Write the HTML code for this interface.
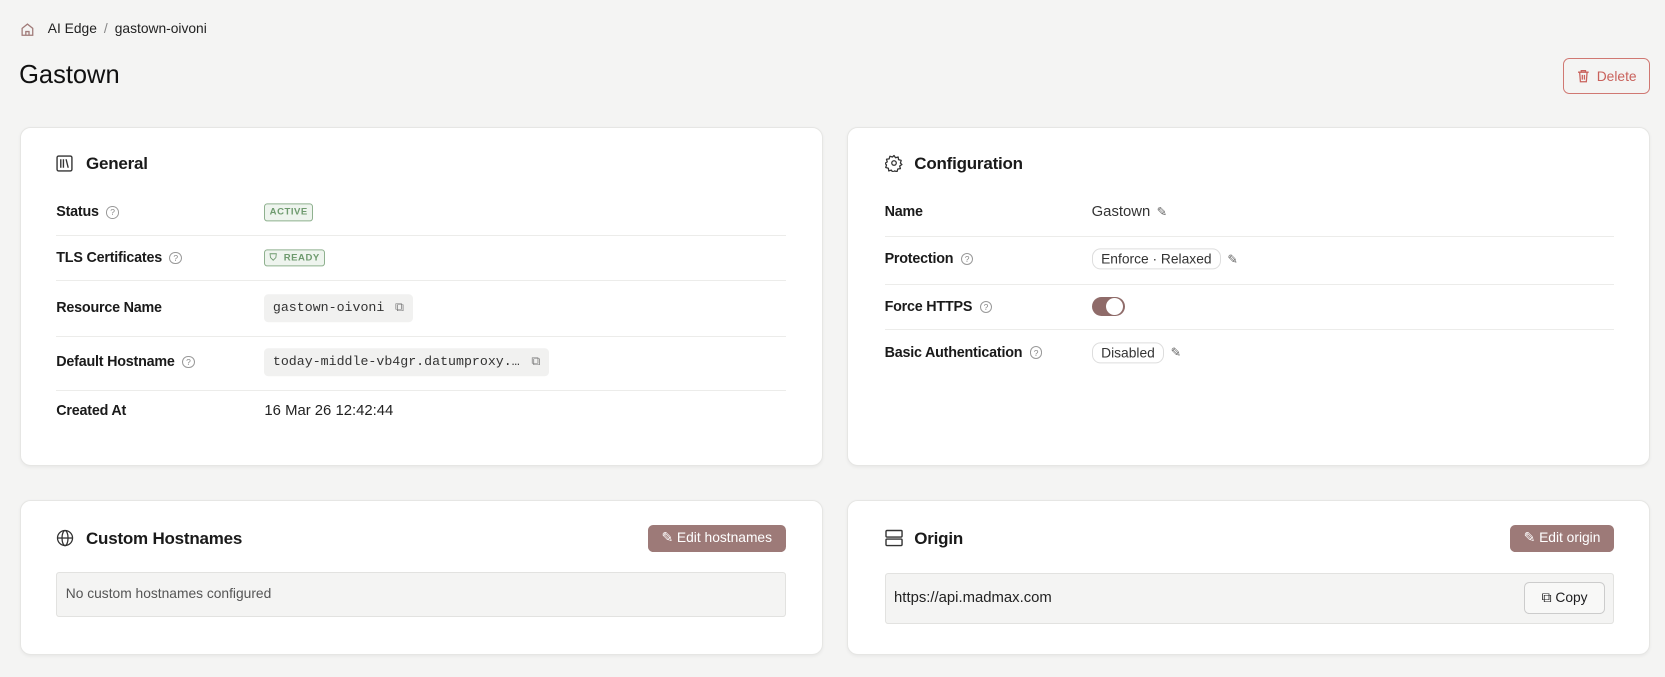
<!DOCTYPE html>
<html><head><meta charset="utf-8"><style>
html,body{margin:0;padding:0;background:#f4f4f3;width:1665px;height:677px;overflow:hidden}
#w{zoom:1.0619;position:relative;width:1568px;height:638px;font-family:"Liberation Sans",sans-serif;color:#1d1d1f}
.a{position:absolute}
.card{position:absolute;background:#fff;border:1px solid #e6e6e4;border-radius:10px;box-shadow:0 1px 3px rgba(0,0,0,.05)}
.h{position:absolute;font-size:16px;font-weight:600;color:#1a1a1a;letter-spacing:-.2px}
.lab{position:absolute;font-size:13.5px;font-weight:600;color:#1a1a1a;transform:translateY(-50%);display:flex;align-items:center;gap:7px;white-space:nowrap;letter-spacing:-.2px}
.val{position:absolute;font-size:14px;transform:translateY(-50%);display:flex;align-items:center;gap:6px;color:#333;white-space:nowrap}
.div{position:absolute;height:1px;background:#ececea}
.q{width:10px;height:10px;border:1px solid #999;border-radius:50%;font-size:8px;color:#888;display:inline-flex;align-items:center;justify-content:center;font-weight:400}
.badge{border:1px solid #8fb18f;background:#eef4ee;color:#6e9a6e;font-size:9px;letter-spacing:.5px;border-radius:3px;padding:2px 4px;font-weight:600}
.mono{font-family:"Liberation Mono",monospace;font-size:12.5px;background:#f1f1f0;border-radius:4px;padding:0 8px;height:26px;display:flex;align-items:center;gap:10px;white-space:nowrap}
.pill{border:1px solid #ddd;border-radius:8px;padding:2px 8px;font-size:13px;color:#333}
.btn{position:absolute;background:#9d7a78;color:#fff;border-radius:5px;font-size:13px;display:flex;align-items:center;justify-content:center;gap:6px}
.cp{color:#777;font-size:12px}
</style></head><body><div id="w">
<svg class="a" style="left:19px;top:21px" width="14" height="14" viewBox="0 0 14 14" fill="none" stroke="#a07a78" stroke-width="1.2"><path d="M2 6L7 2l5 4v6.5H2z"/><path d="M5.5 12.5V9h3v3.5"/></svg>
<div class="a" style="left:45px;top:20px;font-size:13px;color:#222">AI Edge <span style="color:#888;margin:0 3px">/</span> gastown-oivoni</div>
<div class="a" style="left:18px;top:57px;font-size:24px;color:#111">Gastown</div>
<div class="a" style="left:1472px;top:55px;width:80px;height:32px;border:1px solid #d07872;border-radius:6px;color:#c9615b;font-size:13px;display:flex;align-items:center;justify-content:center;gap:7px"><svg width="12" height="13" viewBox="0 0 12 13" fill="none" stroke="#c9615b" stroke-width="1.2"><path d="M1 3h10M4 3V1.5h4V3M2.5 3l.7 9h5.6l.7-9M5 5.5v4.5M7 5.5v4.5"/></svg>Delete</div>

<div class="card" style="left:19px;top:120px;width:754px;height:317px"></div>
<div class="card" style="left:798px;top:120px;width:754px;height:317px"></div>
<div class="card" style="left:19px;top:471px;width:754px;height:144px"></div>
<div class="card" style="left:798px;top:471px;width:754px;height:144px"></div>

<svg class="a" style="left:53px;top:146px" width="16" height="16" viewBox="0 0 16 16" fill="none" stroke="#333" stroke-width="1.3"><rect x="1" y="1" width="14" height="14" rx="1.5"/><path d="M4.5 4v8M7 4v8M9.5 4l2 8"/></svg>
<div class="h" style="left:81px;top:145px">General</div>
<div class="lab" style="left:53px;top:200px">Status <span class="q">?</span></div>
<div class="val" style="left:249px;top:200px"><span class="badge">ACTIVE</span></div>
<div class="div" style="left:53px;top:221px;width:687px"></div>
<div class="lab" style="left:53px;top:243px">TLS Certificates <span class="q">?</span></div>
<div class="val" style="left:249px;top:243px"><span class="badge">⛉&nbsp; READY</span></div>
<div class="div" style="left:53px;top:264px;width:687px"></div>
<div class="lab" style="left:53px;top:290px">Resource Name</div>
<div class="val" style="left:249px;top:290px"><span class="mono">gastown-oivoni <span class="cp">⧉</span></span></div>
<div class="div" style="left:53px;top:316px;width:687px"></div>
<div class="lab" style="left:53px;top:341px">Default Hostname <span class="q">?</span></div>
<div class="val" style="left:249px;top:341px"><span class="mono" style="width:252px;justify-content:space-between">today-middle-vb4gr.datumproxy.… <span class="cp">⧉</span></span></div>
<div class="div" style="left:53px;top:367px;width:687px"></div>
<div class="lab" style="left:53px;top:387px">Created At</div>
<div class="val" style="left:249px;top:387px;color:#222">16 Mar 26 12:42:44</div>

<svg class="a" style="left:833px;top:145px" width="17" height="17" viewBox="0 0 24 24" fill="none" stroke="#333" stroke-width="1.7"><circle cx="12" cy="12" r="3"/><path d="M12 2l2 3 3.5-1 .5 3.5 3.5 1-1 3.5 2 2-3 2 1 3.5-3.5.5-1 3.5-3.5-1-2 2-2-3-3.5 1-.5-3.5-3.5-1 1-3.5-2-2 3-2-1-3.5 3.5-.5 1-3.5 3.5 1z" stroke-linejoin="round"/></svg>
<div class="h" style="left:861px;top:145px">Configuration</div>
<div class="lab" style="left:833px;top:200px">Name</div>
<div class="val" style="left:1028px;top:200px">Gastown <span style="color:#666;font-size:12px">✎</span></div>
<div class="div" style="left:833px;top:222px;width:687px"></div>
<div class="lab" style="left:833px;top:244px">Protection <span class="q">?</span></div>
<div class="val" style="left:1028px;top:244px"><span class="pill">Enforce · Relaxed</span><span style="color:#666;font-size:12px">✎</span></div>
<div class="div" style="left:833px;top:267px;width:687px"></div>
<div class="lab" style="left:833px;top:289px">Force HTTPS <span class="q">?</span></div>
<div class="a" style="left:1028px;top:280px;width:31px;height:18px;border-radius:9px;background:#8f6b69"><div class="a" style="left:14px;top:1px;width:16px;height:16px;border-radius:50%;background:#fff"></div></div>
<div class="div" style="left:833px;top:310px;width:687px"></div>
<div class="lab" style="left:833px;top:332px">Basic Authentication <span class="q">?</span></div>
<div class="val" style="left:1028px;top:332px"><span class="pill">Disabled</span><span style="color:#666;font-size:12px">✎</span></div>

<svg class="a" style="left:53px;top:498px" width="17" height="17" viewBox="0 0 18 18" fill="none" stroke="#333" stroke-width="1.3"><circle cx="9" cy="9" r="7.5"/><ellipse cx="9" cy="9" rx="3" ry="7.5"/><path d="M1.5 9h15"/></svg>
<div class="h" style="left:81px;top:498px">Custom Hostnames</div>
<div class="btn" style="left:610px;top:494px;width:130px;height:26px">✎ Edit hostnames</div>
<div class="a" style="left:53px;top:539px;width:685px;height:40px;background:#f4f4f3;border:1px solid #e2e2e0;border-radius:3px;font-size:13px;color:#555;line-height:40px;text-indent:8px">No custom hostnames configured</div>

<svg class="a" style="left:833px;top:498px" width="17" height="17" viewBox="0 0 18 18" fill="none" stroke="#333" stroke-width="1.4"><rect x="1" y="1.5" width="16" height="6.5" rx="1"/><rect x="1" y="10" width="16" height="6.5" rx="1"/></svg>
<div class="h" style="left:861px;top:498px">Origin</div>
<div class="btn" style="left:1422px;top:494px;width:98px;height:26px">✎ Edit origin</div>
<div class="a" style="left:833px;top:540px;width:685px;height:46px;background:#f4f4f3;border:1px solid #e2e2e0;border-radius:3px;font-size:14px;color:#222;line-height:46px;text-indent:8px">https://api.madmax.com</div>
<div class="a" style="left:1435px;top:548px;width:75px;height:28px;border:1px solid #ccc;border-radius:5px;background:#f8f8f7;font-size:13px;display:flex;align-items:center;justify-content:center;gap:6px">⧉ Copy</div>
</div></body></html>
